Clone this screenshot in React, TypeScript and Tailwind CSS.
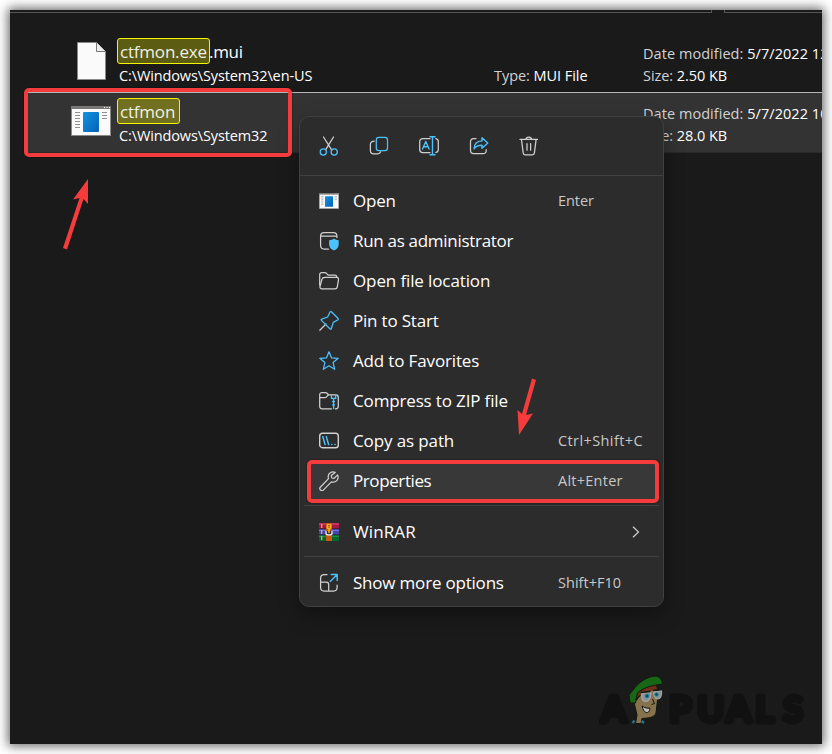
import React from 'react';

const BLUE = '#4cc2ff';
const GREY = '#d0d0d0';

function Icon({ children }: { children: React.ReactNode }) {
  return (
    <svg width="20" height="20" viewBox="0 0 20 20" fill="none" stroke={GREY} strokeWidth="1.25" strokeLinecap="round" strokeLinejoin="round" className="shrink-0">
      {children}
    </svg>
  );
}

const CutIcon = () => (
  <Icon>
    <path d="M4.5 1 12.8 14.2M14.5 1 6.7 13.7" />
    <circle cx="4.3" cy="16" r="3.1" stroke={BLUE} />
    <circle cx="15.2" cy="16" r="3.1" stroke={BLUE} />
  </Icon>
);

const CopyIcon = () => (
  <Icon>
    <path d="M5.2 5.2C3 5.200 1.400 6.500 1.400 8.500v6c0 2 1.300 3.300 3.300 3.300h3.800c1.800 0 2.800-.8 3.200-2" />
    <rect x="7.300" y="1.300" width="11.200" height="13.200" rx="2.600" stroke={BLUE} />
  </Icon>
);

const RenameIcon = () => (
  <Icon>
    <path d="M11 2.700H3.700C2 2.700.7 4 .7 5.700v7.800c0 1.700 1.300 3 3 3H11M16.800 2.700c1.500.3 2.500 1.400 2.500 3v7.800c0 1.600-1 2.700-2.500 3" />
    <path d="M13.500.8v18M11 .8h5M11 18.800h5M3.500 13 6.800 5.500l3.300 7.500M4.600 10.700H9" stroke={BLUE} strokeWidth="1.400" />
  </Icon>
);

const ShareIcon = () => (
  <Icon>
    <path d="M7 2.600H4.600C2.700 2.600 1.500 3.800 1.500 5.700v8.600c0 2 1.200 3.300 3.100 3.300h9.300c1.900 0 3.300-1.200 3.300-3.200v-.7" />
    <path d="M13 1.800 18.800 7 13 12.300V9.200c-3.700-.1-6 1-8 3.500.3-4.300 3.200-7.500 8-7.800Z" stroke={BLUE} strokeWidth="1.400" />
  </Icon>
);

const DeleteIcon = () => (
  <Icon>
    <path d="M1 3.400h17.500M7 3.200C7.200.3 12.400.3 12.600 3.200M2.500 3.600 4.200 16.900c.1 1.100.8 1.900 1.800 1.900h7.600c1 0 1.700-.8 1.800-1.900L17.100 3.600M8 7.500v6.700M11.600 7.500v6.700" />
  </Icon>
);

const AppIcon = ({ className }: { className: string }) => (
  <svg viewBox="0 0 40 30" preserveAspectRatio="none" className={className}>
    <defs>
      <linearGradient id="appFill" x1="0" y1="0" x2="1" y2="1">
        <stop offset="0" stopColor="#1492e2" />
        <stop offset="1" stopColor="#0562b5" />
      </linearGradient>
    </defs>
    <rect x=".5" y=".5" width="39" height="29" fill="#fafafa" stroke="#8a8886" />
    <rect width="40" height="3" fill="#7a7876" />
    <path d="M33 1.500h1M35.500 1.500h1M38 1.500h1" stroke="#fff" />
    <path d="M4 6.500h5M4 9.500h5M4 12.500h5M4 15.500h5M4 18.500h5M4 21.500h5M31 6.500h5M31 9.500h5M31 12.500h5" stroke="#8f8f8f" />
    <rect x="12" y="6" width="16" height="20" rx="1" fill="url(#appFill)" />
  </svg>
);

const AdminIcon = () => (
  <Icon>
    <path d="M9.500 18H5.300C3.200 18 1.600 16.600 1.600 14.500V5C1.600 2.900 3 1.500 5.100 1.500h9.300c2 0 3.500 1.400 3.500 3.500v1.500M1.800 5.200h16" />
    <path d="M15 7.500c1.300 1.200 3 1.600 4.700 1.700v4.300c0 3-2 5-4.700 6-2.700-1-4.900-3-4.900-6V9.200c1.800-.1 3.600-.5 4.900-1.700Z" fill={BLUE} stroke="none" />
  </Icon>
);

const FolderIcon = () => (
  <Icon>
    <path d="M.7 14V3.800C.7 2.500 1.500 1.700 2.800 1.700h3.100c.7 0 1.200.2 1.600.7l1.600 1.700h6.600c1.300 0 2.100.8 2.100 2.100" />
    <path d="M5.800 6.300h11.700c1.400 0 2.200 1 2 2.300l-1.200 7.200c-.2 1.300-1.100 2-2.400 2H3c-1.500 0-2.300-1-2-2.300L2.900 8.300c.3-1.300 1.400-2 2.900-2Z" />
  </Icon>
);

const PinIcon = () => (
  <Icon>
    <path d="M7 13 .8 19.200" />
    <path d="M10.900 1.200c.4-.7 1.200-.8 1.800-.2l6.200 6.200c.6.600.5 1.400-.2 1.800l-4.400 2.400-2 6.300c-.2.6-.7.700-1.200.3L2.400 9.400c-.4-.5-.3-1 .3-1.200l5.900-2.200Z" stroke={BLUE} />
  </Icon>
);

const StarIcon = () => (
  <Icon>
    <path d="m10 .8 2.500 6 6.700.5-5.100 4.300 1.600 6.700-5.700-3.500-5.700 3.500 1.600-6.700L.8 7.300l6.700-.5Z" stroke={BLUE} />
  </Icon>
);

const ZipIcon = () => (
  <Icon>
    <path d="M12.500 17.800H3.200c-1.500 0-2.500-1-2.500-2.500V3.800C.7 2.300 1.700 1.500 3 1.500h3.300c.7 0 1.200.3 1.700.8l1.500 1.500h7.300c1.500 0 2.500 1 2.500 2.500v9c0 1.500-1 2.500-2.500 2.500h-.5M.9 6.700h5.200c1.500 0 2-1.600 3.200-2.700" />
    <path d="M12.500 4.200v3.200h4.200V4.200M14.600 7.600v2M13.700 10.500h1.800M14.600 11v2M13.700 13.900h1.800M14.600 14.300v3.300" stroke={BLUE} strokeWidth="1.400" />
  </Icon>
);

const PathIcon = () => (
  <Icon>
    <rect x=".7" y="2.200" width="18.600" height="14.500" rx="2.800" strokeWidth="1.400" />
    <path d="m3.800 5.600 2.300 8M7.300 5.600l2.300 8M12.700 13.500h.1M16 13.500h.1" stroke={BLUE} strokeWidth="1.500" />
  </Icon>
);

const WrenchIcon = () => (
  <Icon>
    <path d="M16.200 1.400c-3.500-1.500-7.200.9-7 4.500 0 .6.100 1.100.3 1.700l-8 8.400c-2 2.200 1 5 3 2.900l7.900-8c4.100 1.300 8.200-2.500 6.200-7l-3.500 3.400-2.400-.3-.4-2.500Z" />
  </Icon>
);

const WinrarIcon = () => (
  <svg width="20" height="18" viewBox="0 0 20 18" className="shrink-0">
    <rect width="20" height="6" rx=".6" fill="#a51845" />
    <path d="M0 1h20" stroke="#e34c83" />
    <rect y="6" width="20" height="6" rx=".6" fill="#4545ac" />
    <path d="M0 7.300h20" stroke="#8183e0" />
    <rect y="12" width="20" height="6" rx=".6" fill="#08662f" />
    <path d="M0 13.200h20" stroke="#29a553" />
    <path d="M2.700 1v4M2.700 7v4M2.700 13v4" stroke="#eabb39" strokeWidth="1.200" />
    <path d="M0 5.700h20M0 11.700h20" stroke="#211b28" strokeWidth=".7" />
    <rect x="7" width="6" height="18" fill="#c85812" />
    <rect x="7.600" y="1" width="4.800" height="5" rx="1" fill="#f5ae22" />
    <path d="M9 2.500h2M9 4.200h2" stroke="#895108" strokeWidth=".8" />
    <path d="M7 8v2.500c0 1.800 6 1.800 6 0V8" fill="#333" stroke="#eee" strokeWidth="1.300" />
    <path d="M10 5.800v4.200" stroke="#f3ba29" strokeWidth="1.500" />
  </svg>
);

const MoreIcon = () => (
  <Icon>
    <path d="M8 1.600H5.200C3 1.600 1.600 3 1.600 5.200v9.400c0 2.100 1.400 3.500 3.600 3.500h9.300c2.200 0 3.600-1.400 3.600-3.500V12M1.800 9.200h5.400c1.600 0 2.500.9 2.500 2.500V18" />
    <path d="M11.200 8.500 18 1.700M12.200 1.500h6v6" stroke={BLUE} strokeWidth="1.400" />
  </Icon>
);

interface MenuItem {
  label: string;
  icon: React.ReactNode;
  tracking: string;
  shortcut?: string;
  shortcutTracking?: string;
}

const menuItems: MenuItem[] = [
  { label: 'Open', icon: <AppIcon className="h-4 w-5" />, tracking: 'tracking-[-0.2px]', shortcut: 'Enter' },
  { label: 'Run as administrator', icon: <AdminIcon />, tracking: 'tracking-[-0.3px]' },
  { label: 'Open file location', icon: <FolderIcon />, tracking: 'tracking-[-0.12px]' },
  { label: 'Pin to Start', icon: <PinIcon />, tracking: 'tracking-[-0.2px]' },
  { label: 'Add to Favorites', icon: <StarIcon />, tracking: 'tracking-[-0.15px]' },
  { label: 'Compress to ZIP file', icon: <ZipIcon />, tracking: 'tracking-[-0.15px]' },
  { label: 'Copy as path', icon: <PathIcon />, tracking: 'tracking-[-0.12px]', shortcut: 'Ctrl+Shift+C', shortcutTracking: 'tracking-[0.4px]' },
  { label: 'Properties', icon: <WrenchIcon />, tracking: 'tracking-[-0.4px]', shortcut: 'Alt+Enter', shortcutTracking: 'tracking-[0.25px]' },
];

function MenuRow({ item, children }: { item: MenuItem; children?: React.ReactNode }) {
  const active = item.label === 'Properties';
  return (
    <div className={`mx-2 flex h-10 items-center whitespace-nowrap pl-[11px] ${active ? 'rounded bg-[#383838]' : ''}`}>
      <span className="flex w-[34px] shrink-0">{item.icon}</span>
      <span className={`w-[205px] shrink-0 text-[17px] leading-6 text-white ${item.tracking}`}>{item.label}</span>
      <span className={`w-[74px] shrink-0 text-[14.5px] leading-6 text-[#c8c8c8] ${item.shortcutTracking ?? 'tracking-[-0.05px]'}`}>{item.shortcut}</span>
      {children}
    </div>
  );
}

function ContextMenu() {
  return (
    <div className="absolute left-[299px] top-[116px] flex h-[491px] w-[365px] flex-col rounded-[10px] border border-[#404040] bg-[#2c2c2c] shadow-[0_8px_20px_rgba(0,0,0,0.35)]">
      <div className="flex h-[59px] shrink-0 items-center gap-[30px] border-b border-[#414141] pl-[19px]">
        <CutIcon />
        <CopyIcon />
        <RenameIcon />
        <ShareIcon />
        <DeleteIcon />
      </div>
      <div className="pt-[5px]">
        {menuItems.map((item) => (
          <MenuRow key={item.label} item={item} />
        ))}
      </div>
      <div className="mx-1 mb-1.5 mt-1 h-px shrink-0 bg-[#414141]" />
      <MenuRow item={{ label: 'WinRAR', icon: <WinrarIcon />, tracking: 'tracking-[0.1px]' }}>
        <svg width="8" height="12" viewBox="0 0 8 12" fill="none" stroke="#c8c8c8" strokeWidth="1.300">
          <path d="m1 .7 5.500 5.300L1 11.300" />
        </svg>
      </MenuRow>
      <div className="mx-1 mb-1.5 mt-1 h-px shrink-0 bg-[#414141]" />
      <MenuRow item={{ label: 'Show more options', icon: <MoreIcon />, tracking: 'tracking-[-0.2px]', shortcut: 'Shift+F10', shortcutTracking: 'tracking-[0.02px]' }} />
    </div>
  );
}

interface FileRowProps {
  icon: React.ReactNode;
  match: string;
  rest?: string;
  path: string;
  type?: string;
  date: string;
  size: string;
  selected?: boolean;
}

function FileRow({ icon, match, rest, path, type, date, size, selected }: FileRowProps) {
  return (
    <div className={`ml-[18px] flex whitespace-nowrap text-white ${selected ? 'h-[61px] border-b border-t border-b-[#292929] border-t-[#b5b5b5] bg-[#333333] pt-px' : 'h-[59px] pt-px'}`}>
      <div className="flex w-[88px] shrink-0 justify-center pl-[38px] pt-2">{icon}</div>
      <div className="w-[377px] shrink-0 pt-1">
        <div className="flex h-[26px] text-[17px] leading-[25px] tracking-[-0.2px]">
          <span className={`ml-px h-[26px] rounded-[3px] border border-[#f5f500] px-0.5 text-[#f0f0e4] ${selected ? 'w-[63px] bg-[#707020]' : 'w-[93px] bg-[#5c5c12]'}`}>{match}</span>
          <span className="-ml-px pt-px tracking-[-0.3px]">{rest}</span>
        </div>
        <div className="ml-[3px] pt-px text-[14.5px] leading-[22px] tracking-[-0.12px]">{path}</div>
      </div>
      <div className="w-[150px] shrink-0 pl-px pt-[31px] text-[14.5px] leading-[22px] tracking-[-0.05px]">
        {type && (
          <>
            <span className="text-[#d2d2d2]">Type: </span>
            {type}
          </>
        )}
      </div>
      <div className="pt-[9px] text-[14.5px] leading-[22px]">
        <div className="tracking-[0.05px]">
          <span className="text-[#d2d2d2]">Date modified: </span>
          {date}
        </div>
        <div className="tracking-[-0.05px]">
          <span className="text-[#d2d2d2]">Size: </span>
          {size}
        </div>
      </div>
    </div>
  );
}

function Watermark() {
  return (
    <svg width="210" height="54" viewBox="0 0 210 54" className="absolute bottom-[15px] right-[13px]">
      <g fill="#111" stroke="#111" strokeWidth="5" strokeLinejoin="round" fontFamily="Lato, sans-serif" fontSize="36.5" fontWeight="700">
        <text x="2" y="47">A</text>
        <text x="70 98 127 156 184" y="47">PUALS</text>
      </g>
      <g stroke="#151510" strokeLinejoin="round">
        <path d="M35 27 38 40 36.500 48.500H42L43 43.500C49 43 55 43 57 38L58.500 25 57 11 37 18Z" fill="#86734e" />
        <path d="M37 18 51 11 57 10 58 15 51 16 41 20 38 26Z" fill="#703018" stroke="none" />
        <path d="M30 20 34 15C39 8 47 2 56 1c4 0 7 3 7.500 8-9 1.500-17 2-25 9l-2 10H31Z" fill="#176814" />
        <path d="M42.500 18.500 52 17.500C52 23 50 27 46 26.500c-2.500-.3-3.500-4-3.500-8ZM54.500 17l8-1.500c.5 5-1 8.500-4 8.500-2.500 0-3.500-3-4-7Z" fill="#8c9496" stroke="#a5a5a5" strokeWidth="1.200" />
        <path d="m36.500 25 5-5M41.500 17.500l10-1M54 15.500l9-1" stroke="#101719" strokeWidth="1.400" />
        <circle cx="48" cy="21" r="2" fill="#0e4a60" stroke="#2a87a0" />
        <circle cx="57.500" cy="19.500" r="1.800" fill="#0e4a60" stroke="#2a87a0" />
        <path d="M43 31c3 2 5 2.500 8 2-.5 4-2 5-4 4.500-2-.7-3-3-4-6.500Z" fill="#bbb" />
        <path d="m53.500 24 2 4.500-3 1" fill="none" />
        <path d="m33.500 48 2-2.500M42.500 46l2.500 2" stroke="#247384" strokeWidth="2.500" />
      </g>
    </svg>
  );
}

export default function App() {
  return (
    <div className="relative h-[754px] w-[832px] overflow-hidden bg-white font-['Open_Sans','Noto_Sans',sans-serif]">
      <div className="px-2.5 pt-2.5">
        <main className="relative h-[734px] w-[812px] bg-[#1a1a1a] shadow-[0_0_10px_2px_rgba(0,0,0,0.6)]">
          <div className="h-full overflow-hidden">
            <div className="flex h-[23px] gap-3">
              <div className="h-[3px] w-[702px] border-b border-r border-[#555]" />
              <div className="h-[3px] flex-1 border-b border-l border-[#555]" />
            </div>
            <FileRow
              icon={
                <svg width="29" height="38" viewBox="0 0 29 38">
                  <path d="M.5.5H19.500L28.500 9.500V37.500H.5Z" fill="#fafafa" stroke="#8b8986" />
                  <path d="M19.500.5v9H28.500" fill="#eee" stroke="#777" />
                </svg>
              }
              match="ctfmon.exe"
              rest=".mui"
              path="C:\Windows\System32\en-US"
              type="MUI File"
              date="5/7/2022 12"
              size="2.50 KB"
            />
            <FileRow
              icon={<div className="-ml-px pt-1"><AppIcon className="h-[30px] w-10" /></div>}
              match="ctfmon"
              path="C:\Windows\System32"
              date="5/7/2022 10"
              size="28.0 KB"
              selected
            />
          </div>
          <Watermark />
        </main>
      </div>
      <ContextMenu />

      {/* Red callouts over the window */}
      <div className="absolute left-6 top-[88px] h-[69px] w-[268px] rounded-[5px] border-4 border-[#f53b3b] shadow-[0_0_2px_rgba(0,0,0,0.6)]" />
      <div className="absolute left-[307px] top-[460px] h-[43px] w-[352px] rounded-[5px] border-4 border-[#f53b3b] shadow-[0_0_2px_rgba(0,0,0,0.6)]" />
      <svg width="832" height="754" className="pointer-events-none absolute left-0 top-0" fill="#f53b3b">
        <path d="M88 179 88 204 83.500 199 67 249.500 63 248 79.500 198 73 199.500Z" />
        <path d="M532 378.500 536 380 526 415 533 413.500 519 435 517.500 410 522 414Z" />
      </svg>
    </div>
  );
}
